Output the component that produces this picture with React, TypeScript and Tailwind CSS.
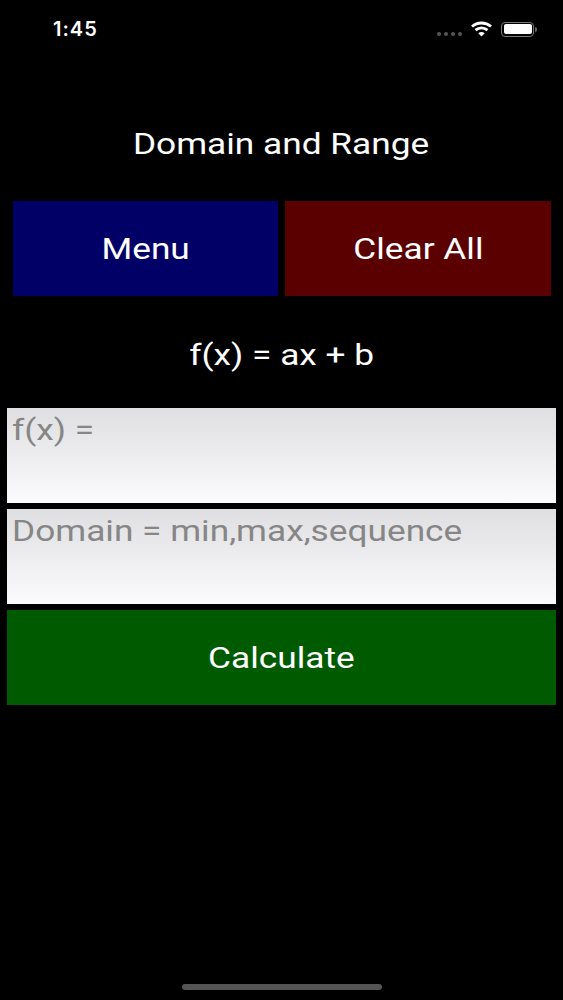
const StatusBar = () => (
    <div className="flex h-[58px] items-center justify-between pl-[53px] pr-[26px] text-white">
        <span className="text-[20px] font-semibold tracking-[1px] font-['Inter',sans-serif]">1:45</span>
        <div className="flex items-center">
            <div className="flex gap-[3px] mt-[9px] mr-[8px]">
                <span className="w-[4px] h-[4px] rounded-full bg-[#555]" />
                <span className="w-[4px] h-[4px] rounded-full bg-[#555]" />
                <span className="w-[4px] h-[4px] rounded-full bg-[#555]" />
                <span className="w-[4px] h-[4px] rounded-full bg-[#555]" />
            </div>
            <svg width="23" height="16" viewBox="0 0 22 16" fill="none" className="mr-[8px]">
                <path d="M1.5 5.5C7 .8 15 .8 20.5 5.5" stroke="white" strokeWidth="2.8" />
                <path d="M5 9.2c3.6-3 8.4-3 12 0" stroke="white" strokeWidth="2.8" />
                <path d="M11 15.5l-3.2-3.3c1.9-1.5 4.5-1.5 6.4 0z" fill="white" />
            </svg>
            <div className="w-[33px] h-[15px] rounded-[4px] border-[1.5px] border-[#777] p-[1.5px]">
                <div className="w-full h-full rounded-[2px] bg-white" />
            </div>
            <span className="ml-[1px] w-[2px] h-[5px] rounded-r-sm bg-[#666]" />
        </div>
    </div>
);

// the font in the picture is Roboto pulled wide, so labels get a horizontal stretch
const Label = ({ text }: { text: string }) => (
    <span className="inline-block scale-x-[1.175]">{text}</span>
);

const Field = ({ hint }: { hint: string }) => (
    <div className="h-[95px] px-[5px] py-[2px] leading-[40px] bg-gradient-to-b from-[#dfdfe1] to-[#fbfbfe] text-[#868686]">
        <span className="inline-block origin-left scale-x-[1.175] whitespace-nowrap">{hint}</span>
    </div>
);

const App = () => {
    return (
        <div className="relative w-[563px] h-[1000px] bg-black overflow-hidden font-['Roboto',sans-serif] text-[30px] text-white">
            <StatusBar />
            <h1 className="mt-[65px] h-[40px] flex items-center justify-center font-normal">
                <Label text="Domain and Range" />
            </h1>
            <div className="mt-[38px] flex gap-[7px] pl-[13px] pr-[12px]">
                <button className="w-[265px] h-[95px] bg-[#000066]"><Label text="Menu" /></button>
                <button className="flex-1 h-[95px] bg-[#5a0000]"><Label text="Clear All" /></button>
            </div>
            <div className="mt-[38px] h-[40px] flex items-center justify-center">
                <Label text="f(x) = ax + b" />
            </div>
            <div className="mt-[34px] mx-[7px] flex flex-col gap-[6px]">
                <Field hint="f(x) =" />
                <Field hint="Domain = min,max,sequence" />
                <button className="w-full h-[95px] bg-[#005a00]"><Label text="Calculate" /></button>
            </div>
            <div className="absolute left-[182px] bottom-[10px] w-[200px] h-[6px] rounded-full bg-[#555]" />
        </div>
    );
};

export default App;
